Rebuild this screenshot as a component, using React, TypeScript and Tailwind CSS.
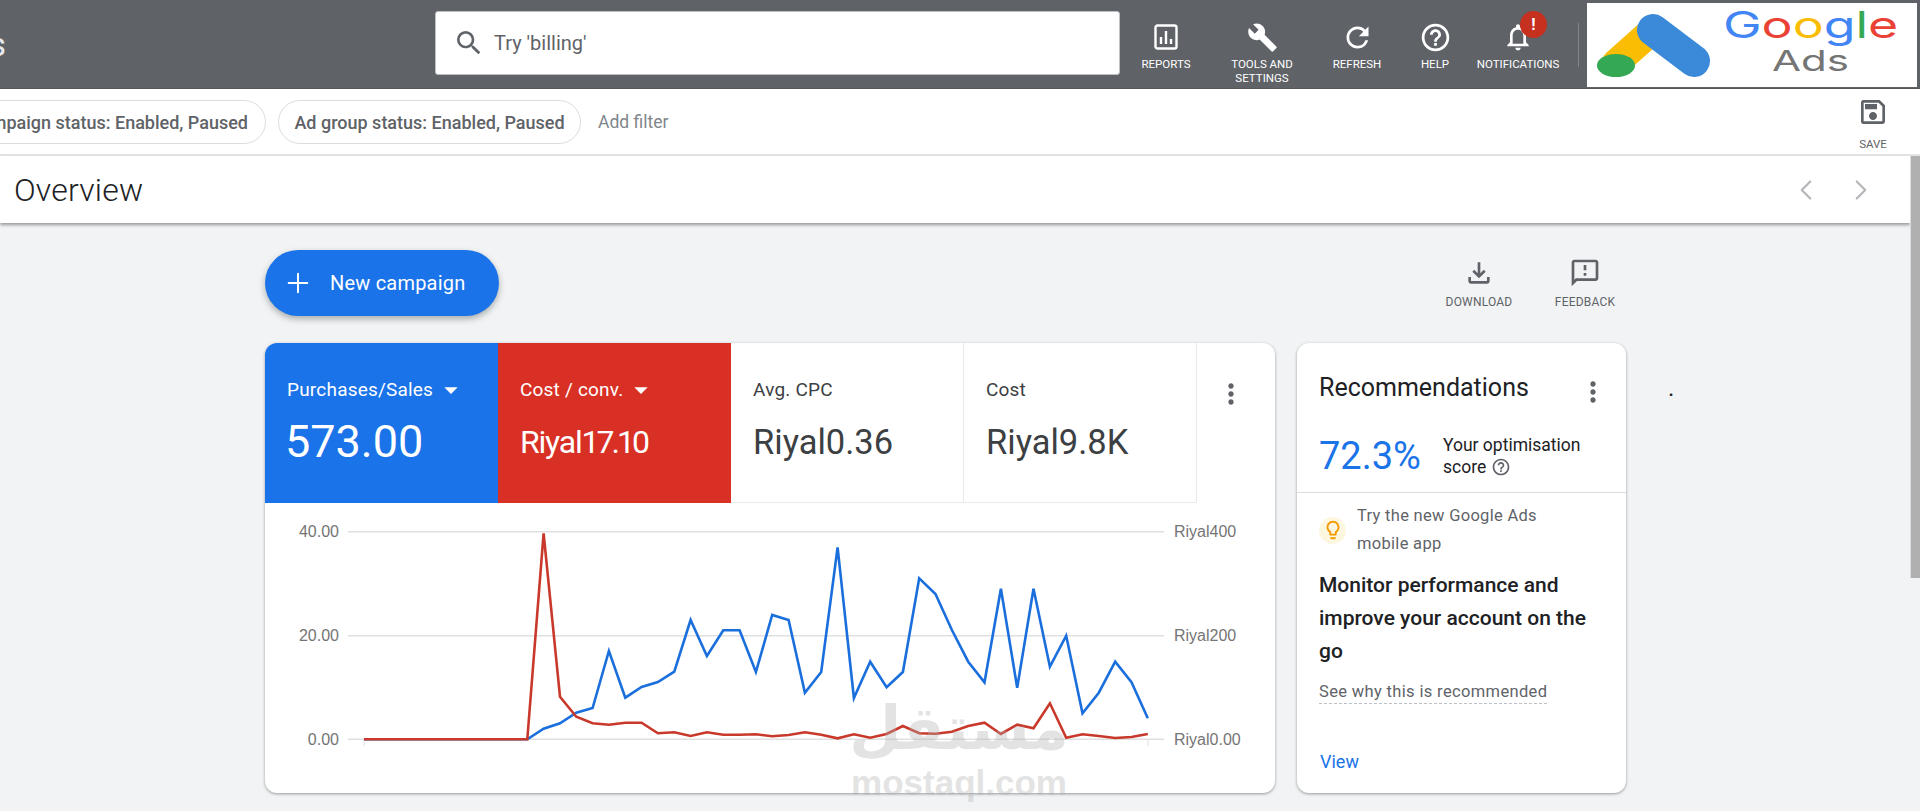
import { Plus, ChevronLeft, ChevronRight } from "lucide-react";
import {
  MdSearch,
  MdBuild,
  MdRefresh,
  MdHelpOutline,
  MdNotificationsNone,
  MdOutlineSave,
  MdOutlineFileDownload,
  MdOutlineFeedback,
  MdMoreVert,
  MdOutlineLightbulb,
  MdArrowDropDown,
} from "react-icons/md";

// y values are read off the reference, 0 line = 688
const blue = [688, 656, 640, 608, 594, 423, 563, 531, 516, 485, 330, 438, 361, 361, 486, 315, 330, 548, 486, 112, 564, 455, 532, 486, 205, 252, 360, 455, 517, 236, 533, 236, 470, 377, 610, 548, 455, 517, 625];
const red = [688, 70, 560, 620, 640, 644, 638, 638, 670, 667, 678, 667, 674, 674, 673, 679, 675, 667, 674, 685, 673, 683, 672, 648, 670, 671, 665, 648, 638, 672, 644, 655, 580, 683, 673, 678, 684, 681, 672];

function toPoints(values: number[]) {
  const flat = Array.from({ length: 10 }, (_, i) => `${99 + i * 16.33},237.3`);
  const rest = values.map((v, i) => `${(99 + (i + 10) * 16.33).toFixed(1)},${(8 + v / 3).toFixed(1)}`);
  return [...flat, ...rest].join(" ");
}

function ReportsIcon() {
  return (
    <svg width="24" height="26" viewBox="0 0 24 26" fill="none">
      <rect x="1.5" y="1.5" width="21" height="23" rx="2" stroke="white" strokeWidth="2.4" />
      <path d="M7 13v7M12 7v13M17 15v5" stroke="white" strokeWidth="2.4" />
    </svg>
  );
}

function NavItem({ label, width, icon, second }: { label: string; width: string; icon: React.ReactNode; second?: string }) {
  return (
    <div className={`${width} shrink-0 h-full flex flex-col items-center pt-[21px] text-white`}>
      <div className="h-[32px] flex items-center justify-center">{icon}</div>
      <div className="mt-[4px] text-[11.5px] leading-[14px] text-center whitespace-nowrap">
        {label}
        {second && <div>{second}</div>}
      </div>
    </div>
  );
}

function Tile({ label, value, valueClass, tileClass, caret }: { label: string; value: React.ReactNode; valueClass: string; tileClass: string; caret?: boolean }) {
  return (
    <div className={`w-[233px] h-[160px] shrink-0 px-[22px] pt-[35px] ${tileClass}`}>
      <div className="flex items-center h-[24px] text-[19px] tracking-[0.2px]">
        {label}
        {caret && <MdArrowDropDown className="ml-[2px]" size={32} />}
      </div>
      <div className={`mt-[16px] leading-[48px] ${valueClass}`}>{value}</div>
    </div>
  );
}

function GoogleAdsLogo() {
  return (
    <div className="w-[330px] h-[84px] bg-white flex shrink-0 ml-[8px]">
      <svg className="shrink-0" width="128" height="84" viewBox="0 0 128 84">
        <line x1="29" y1="60" x2="66" y2="27" stroke="#fbbc04" strokeWidth="28" strokeLinecap="round" />
        <line x1="66" y1="27" x2="107" y2="58" stroke="#3b8ad9" strokeWidth="32" strokeLinecap="round" />
        <ellipse cx="29" cy="62.5" rx="19" ry="11.5" fill="#34a853" />
      </svg>
      <div className="ml-[9px] flex flex-col items-center font-['Inter',sans-serif] w-[173px]">
        <div className="text-[37px] leading-[44px] scale-x-[1.4]">
          <span className="text-[#4285f4]">G</span>
          <span className="text-[#ea4335]">o</span>
          <span className="text-[#fbbc04]">o</span>
          <span className="text-[#4285f4]">g</span>
          <span className="text-[#34a853]">l</span>
          <span className="text-[#ea4335]">e</span>
        </div>
        <div className="text-[29px] leading-[30px] text-[#757575] mt-[-1px] scale-x-[1.45]">Ads</div>
      </div>
    </div>
  );
}

function Chart() {
  return (
    <svg className="block -mt-[1px]" width="1010" height="290" viewBox="0 0 1010 290">
      {[29.7, 133.7, 237.3].map((y) => (
        <line key={y} x1="83" x2="899" y1={y} y2={y} stroke="#e0e0e0" strokeWidth="1.5" />
      ))}
      <line x1="99" x2="99" y1="237" y2="244" stroke="#e0e0e0" />
      <line x1="883" x2="883" y1="237" y2="244" stroke="#e0e0e0" />
      {[["40.00", 35], ["20.00", 139], ["0.00", 242.5]].map(([t, y]) => (
        <text key={t} x="74" y={y} textAnchor="end" className="fill-[#757575] text-[16px] font-['Liberation_Sans',sans-serif]">
          {t}
        </text>
      ))}
      {[["Riyal400", 35], ["Riyal200", 139], ["Riyal0.00", 242.5]].map(([t, y]) => (
        <text key={t} x="909" y={y} className="fill-[#757575] text-[16px] font-['Liberation_Sans',sans-serif]">
          {t}
        </text>
      ))}
      <polyline points={toPoints(blue)} fill="none" stroke="#1a6fdc" strokeWidth="2.6" />
      <polyline points={toPoints(red)} fill="none" stroke="#c9392b" strokeWidth="2.6" />
    </svg>
  );
}

export default function App() {
  return (
    <div className="w-full h-[811px] overflow-hidden relative flex flex-col bg-[#f1f3f4] font-['Roboto',sans-serif]">
      <header className="h-[89px] shrink-0 bg-[#5f6368] flex items-start border-b border-[#55585c]">
        <div className="w-[6px] h-[88px] overflow-hidden flex justify-end items-center shrink-0">
          <span className="text-[34px] text-[#e8eaed] shrink-0">s</span>
        </div>
        <div className="ml-[429px] mt-[11px] w-[685px] h-[64px] bg-white rounded-[3px] border border-[#bdc1c6] flex items-center pl-[17px] shrink-0">
          <MdSearch className="text-[#5f6368]" size={32} />
          <span className="ml-[9px] text-[20px] text-[#5f6368]">Try 'billing'</span>
        </div>
        <div className="ml-[11px] flex h-full">
          <NavItem label="REPORTS" width="w-[70px]" icon={<ReportsIcon />} />
          <NavItem label="TOOLS AND" second="SETTINGS" width="w-[122px]" icon={<MdBuild size={31} />} />
          <NavItem label="REFRESH" width="w-[68px]" icon={<MdRefresh size={33} />} />
          <NavItem label="HELP" width="w-[88px]" icon={<MdHelpOutline size={33} />} />
          <div className="relative">
            <NavItem label="NOTIFICATIONS" width="w-[78px]" icon={<MdNotificationsNone size={32} />} />
            <div className="absolute left-[41px] top-[11px] w-[27px] h-[27px] rounded-full bg-[#c5301f] text-white text-[16px] font-bold flex items-center justify-center">!</div>
          </div>
        </div>
        <div className="ml-[21px] mt-[23px] w-px h-[44px] bg-[#80868b] shrink-0" />
        <div className="mt-[3px]">
          <GoogleAdsLogo />
        </div>
      </header>

      <div className="h-[67px] shrink-0 bg-white border-b-2 border-[#e4e5e6] flex items-start">
        <div className="w-[266px] mt-[11px] flex justify-end overflow-hidden shrink-0">
          <div className="shrink-0 h-[44px] px-[17px] rounded-full border border-[#dadce0] flex items-center text-[18px] font-medium text-[#5f6368] whitespace-nowrap">
            Campaign status: Enabled, Paused
          </div>
        </div>
        <div className="ml-[12px] mt-[11px] h-[44px] w-[303px] justify-center rounded-full border border-[#dadce0] flex items-center text-[18px] font-medium text-[#5f6368] whitespace-nowrap shrink-0">
          Ad group status: Enabled, Paused
        </div>
        <div className="ml-[17px] mt-[11px] h-[44px] flex items-center text-[17.5px] text-[#80868b]">Add filter</div>
        <div className="ml-auto mr-[31px] flex flex-col items-center text-[#5f6368]">
          <MdOutlineSave className="mt-[7px]" size={32} />
          <span className="mt-[9px] text-[11.5px] leading-[14px]">SAVE</span>
        </div>
      </div>

      <div className="flex-1 flex min-h-0">
        <main className="flex-1 min-w-0 flex flex-col">
          <div className="h-[67px] shrink-0 bg-white shadow-[0_2px_3px_rgba(60,64,67,0.5)] flex items-center pl-[14px] pr-[32px]">
            <h1 className="text-[32px] leading-[36px] font-light tracking-[0.2px] text-[#202124]">Overview</h1>
            <ChevronLeft className="ml-auto text-[#b3b5b8]" size={34} strokeWidth={1.5} />
            <ChevronRight className="ml-[21px] text-[#b3b5b8]" size={34} strokeWidth={1.5} />
          </div>

          <div className="pl-[265px] flex items-start pt-[27px]">
            <button className="w-[234px] h-[66px] rounded-full bg-[#1a73e8] shadow-[0_3px_6px_rgba(60,64,67,0.4)] flex items-center pl-[17px] text-white text-[20px] tracking-[0.2px]">
              <Plus size={32} strokeWidth={1.5} />
              <span className="ml-[16px]">New campaign</span>
            </button>
            <div className="ml-[947px] w-[66px] flex flex-col items-center text-[#5f6368] pt-[7px]">
              <MdOutlineFileDownload size={32} />
              <span className="mt-[6px] text-[12px] leading-[14px] tracking-[0.2px]">DOWNLOAD</span>
            </div>
            <div className="ml-[40px] w-[66px] flex flex-col items-center text-[#5f6368] pt-[7px]">
              <MdOutlineFeedback size={32} />
              <span className="mt-[6px] text-[12px] leading-[14px] tracking-[0.2px]">FEEDBACK</span>
            </div>
          </div>

          <div className="pl-[265px] pt-[27px] flex items-start">
            <section className="w-[1010px] h-[450px] shrink-0 bg-white rounded-[12px] overflow-hidden shadow-[0_1px_3px_rgba(60,64,67,0.5)]">
              <div className="flex h-[160px]">
                <Tile label="Purchases/Sales" value="573.00" caret valueClass="text-[45px] -ml-[2px]" tileClass="bg-[#1a73e8] text-white" />
                <Tile
                  label="Cost / conv."
                  value={
                    <>
                      <span className="tracking-[-1.2px]">Riyal</span>
                      <span className="tracking-[-3px]">17.10</span>
                    </>
                  }
                  caret
                  valueClass="text-[32px]"
                  tileClass="bg-[#d93025] text-white"
                />
                <Tile label="Avg. CPC" value="Riyal0.36" valueClass="text-[34.5px]" tileClass="bg-white text-[#3c4043] border-r border-b border-[#e8eaed]" />
                <Tile label="Cost" value="Riyal9.8K" valueClass="text-[34.5px]" tileClass="bg-white text-[#3c4043] border-r border-b border-[#e8eaed]" />
                <div className="flex-1 flex justify-center pt-[35px] pr-[10px]">
                  <MdMoreVert className="text-[#5f6368]" size={32} />
                </div>
              </div>
              <Chart />
            </section>

            <aside className="ml-[22px] w-[329px] h-[450px] shrink-0 bg-white rounded-[12px] shadow-[0_1px_3px_rgba(60,64,67,0.5)] flex flex-col">
              <div className="h-[150px] shrink-0 border-b border-[#dadce0] px-[22px]">
                <div className="flex items-center pt-[28px] h-[62px]">
                  <h2 className="text-[25px] leading-[32px] text-[#202124]">Recommendations</h2>
                  <MdMoreVert className="ml-auto mr-[-5px] mt-[8px] text-[#5f6368]" size={32} />
                </div>
                <div className="flex items-center mt-[28px]">
                  <span className="text-[38px] leading-[46px] text-[#1a73e8] w-[124px] shrink-0">72.3%</span>
                  <div className="text-[17.5px] leading-[22px] text-[#202124]">
                    <div>Your optimisation</div>
                    <div className="flex items-center">
                      score
                      <MdHelpOutline className="ml-[5px] text-[#5f6368]" size={20} />
                    </div>
                  </div>
                </div>
              </div>
              <div className="px-[22px] flex-1 flex flex-col">
                <div className="flex items-center mt-[9px]">
                  <div className="w-[27px] h-[27px] rounded-full bg-[#fef7e0] flex items-center justify-center shrink-0">
                    <MdOutlineLightbulb className="text-[#f29900]" size={22} />
                  </div>
                  <div className="ml-[11px] text-[16.5px] leading-[28px] tracking-[0.3px] text-[#5f6368]">
                    Try the new Google Ads
                    <br />
                    mobile app
                  </div>
                </div>
                <div className="mt-[11px] text-[21px] leading-[33px] font-medium text-[#202124]">
                  Monitor performance and improve your account on the go
                </div>
                <div className="mt-[13px] self-start text-[16.5px] leading-[22px] tracking-[0.35px] text-[#5f6368] border-b border-dashed border-[#bdc1c6]">
                  See why this is recommended
                </div>
                <div className="mt-auto mb-[19px] ml-[1px] text-[18px] leading-[24px] text-[#1a73e8]">View</div>
              </div>
            </aside>
            <span className="ml-[42px] mt-[33px] text-[24px] leading-[24px] text-[#202124]">.</span>
          </div>
        </main>

        <div className="w-[10px] shrink-0">
          <div className="h-[422px] bg-[#b0b0b0] border-l border-[#dcdcdc]" />
        </div>
      </div>

      {/* mostaql watermark */}
      <div className="absolute left-[853px] top-[693px] w-[212px] flex flex-col items-center text-[#b0b0b0] opacity-35 pointer-events-none">
        <div className="text-[60px] leading-[70px] font-bold font-['DejaVu_Sans',sans-serif]">مستقل</div>
        <div className="text-[35px] leading-[40px] font-bold font-['Liberation_Sans',sans-serif]">mostaql.com</div>
      </div>
    </div>
  );
}
